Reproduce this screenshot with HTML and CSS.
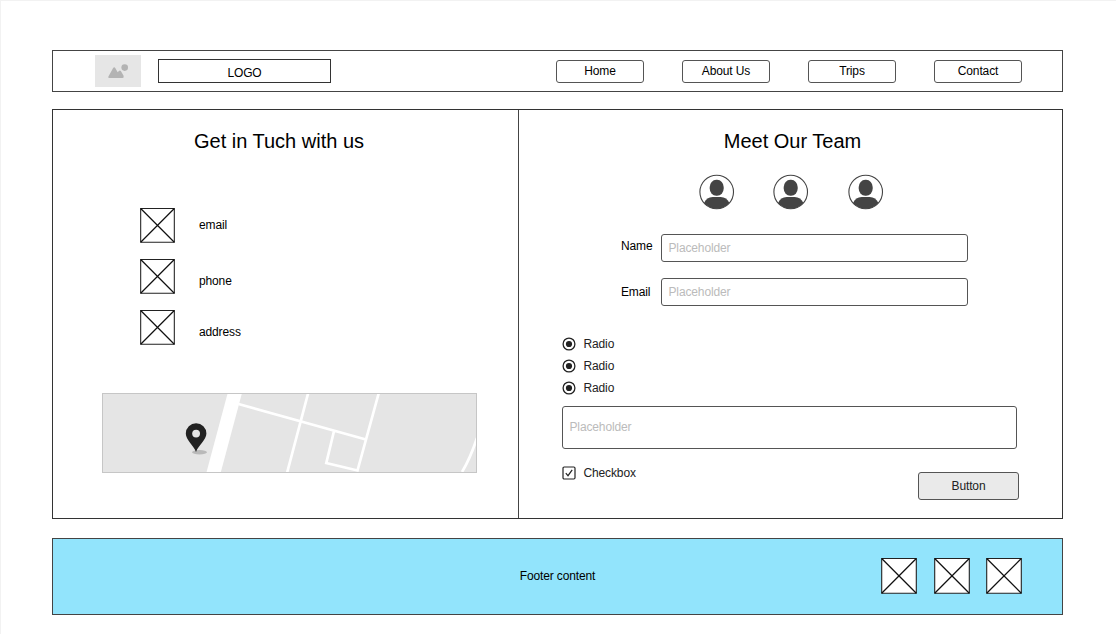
FILE: index.html
```html
<!DOCTYPE html>
<html lang="en">
<head>
<meta charset="utf-8">
<title>Contact</title>
<link rel="stylesheet" href="styles.css">
</head>
<body>
<svg class="defs" aria-hidden="true">
  <symbol id="cross" viewBox="0 0 36 36"><path d="M.7 .5H35.3V35.2H.7Z" fill="#fff" stroke="#222" stroke-width="1.1"/><path d="M.7 .5L35.3 35.2M35.3 .5L.7 35.2" stroke="#111" stroke-width="1.25"/></symbol>
  <symbol id="avatar" viewBox="0.3 0 36 36"><circle cx="18" cy="18" r="16.8" fill="#fff"/><path d="M5.300 29C7 25 10 23 14 23H22C26 23 29 25 30.700 29A16.800 16.800 0 0 1 5.300 29Z" fill="#444"/><rect x="11" y="5.800" width="14" height="16" rx="6.600" ry="7.300" fill="#444"/><circle cx="18" cy="18" r="16.800" fill="none" stroke="#444" stroke-width="1.100"/></symbol>
  <symbol id="radio" viewBox="0 0 14 14"><circle cx="7" cy="7" r="5.900" fill="#fff" stroke="#222" stroke-width="1.300"/><circle cx="7" cy="7" r="3.100" fill="#222"/></symbol>
</svg>
<div class="page">
  <header class="header">
    <svg class="picture" viewBox="0 0 46 32"><rect width="46" height="32" fill="#e6e6e6"/><circle cx="29.700" cy="12.600" r="3.300" fill="#b3b3b3"/><path d="M13.300 21.700L18 13.200Q19.200 11.400 20.400 13.200L22.700 17.200L23.900 15.900Q25 15 26 16.200L28.600 20.700Q29.200 22.900 27.500 23H14.500Q12.800 23 13.300 21.700Z" fill="#b3b3b3"/></svg>
    <div class="logo">LOGO</div>
    <nav class="nav"><a>Home</a><a>About Us</a><a>Trips</a><a>Contact</a></nav>
  </header>
  <main class="main">
    <section class="touch">
      <h2>Get in Tuch with us</h2>
      <ul class="contacts">
        <li><svg class="cross"><use href="#cross"/></svg><span>email</span></li>
        <li class="low"><svg class="cross"><use href="#cross"/></svg><span>phone</span></li>
        <li class="low"><svg class="cross"><use href="#cross"/></svg><span>address</span></li>
      </ul>
      <svg class="map" viewBox="0 0 375 80">
        <rect width="375" height="80" fill="#e5e5e5"/>
        <path d="M125.700 0H140L118.600 80H104.300Z" fill="#fff"/>
        <g fill="none" stroke="#fff" stroke-width="2.700">
          <path d="M136.500 11L263 46.300M206.200 0L185 80M276.800 0L255.500 77.500L224.300 70L232 38M375 45Q368 66 360 79"/>
        </g>
        <ellipse cx="97.500" cy="59.300" rx="7.500" ry="2.200" fill="#b9b9b9"/>
        <path d="M94 59C91.300 52 83.800 47 83.800 40.600A10.300 10.300 0 0 1 104.400 40.600C104.400 47 96.700 52 94 59Z" fill="#222"/>
        <circle cx="94.100" cy="40.600" r="3.900" fill="#e5e5e5"/>
        <rect x=".5" y=".5" width="374" height="79" fill="none" stroke="#c6c6c6"/>
      </svg>
    </section>
    <section class="team">
      <h2>Meet Our Team</h2>
      <div class="avatars"><svg><use href="#avatar"/></svg><svg><use href="#avatar"/></svg><svg><use href="#avatar"/></svg></div>
      <div class="field name"><span class="label">Name</span><div class="input">Placeholder</div></div>
      <div class="field"><span class="label">Email</span><div class="input">Placeholder</div></div>
      <div class="radios">
        <div class="option"><svg><use href="#radio"/></svg>Radio</div>
        <div class="option"><svg><use href="#radio"/></svg>Radio</div>
        <div class="option"><svg><use href="#radio"/></svg>Radio</div>
      </div>
      <div class="input message">Placeholder</div>
      <div class="actions">
        <div class="option"><svg viewBox="0 0 14 14"><rect x="1" y="1" width="12" height="12" rx="1.200" fill="#fff" stroke="#222" stroke-width="1.200"/><path d="M3.800 7.200L6 9.700L10.200 3.900" fill="none" stroke="#222" stroke-width="1.200"/></svg>Checkbox</div>
        <div class="button">Button</div>
      </div>
    </section>
  </main>
  <footer class="footer">
    <span>Footer content</span>
    <div class="social"><svg class="cross"><use href="#cross"/></svg><svg class="cross"><use href="#cross"/></svg><svg class="cross"><use href="#cross"/></svg></div>
  </footer>
</div>
</body>
</html>
```
FILE: styles.css
```css
* { box-sizing: border-box; }
body { margin: 0; background: #fff; color: #000; font: 12px/14px "Liberation Sans", Arial, sans-serif; letter-spacing: -.13px; }
svg { display: block; flex: none; }
.defs { display: none; }
.page { height: 634px; overflow: hidden; border-top: 1px solid #f2f2f2; border-left: 1px solid #f2f2f2; padding: 49px 53px 0 51px; }
.header { height: 42px; border: 1px solid #444; display: flex; align-items: flex-start; padding: 4px 40px 0 42.400px; }
.picture { width: 46px; height: 32px; }
.logo { margin: 4px 0 0 16.600px; width: 173px; height: 24px; border: 1px solid #333; text-align: center; padding-top: 6px; }
.nav { margin: 5px 0 0 auto; display: flex; gap: 38px; }
.nav a { width: 88px; height: 23px; border: 1px solid #555; border-radius: 3px; text-align: center; padding-top: 3px; }
.main { margin-top: 17px; height: 410px; border: 1px solid #333; display: flex; }
h2 { margin: 0; font-size: 20px; line-height: 23px; font-weight: 400; letter-spacing: 0; text-align: center; }
.touch { width: 465px; padding-top: 20px; }
.touch h2 { margin-right: 13px; }
.contacts { list-style: none; margin: 54px 0 0 87.400px; padding: 0; display: grid; gap: 15px; }
.contacts li { display: flex; align-items: center; gap: 23.600px; height: 36px; }
.low span { padding-top: 10px; }
.cross { width: 36px; height: 36px; }
.contacts .cross { width: 35px; height: 35px; }
.map { width: 375px; height: 80px; margin: 48px 0 0 49px; }
.team { flex: 1; border-left: 1px solid #444; padding: 20px 43px 0; }
.team h2 { margin-left: 4px; }
.avatars { display: flex; gap: 38.5px; margin: 21px 0 0 136.7px; }
.avatars svg { width: 36px; height: 36px; }
.field { display: flex; margin: 16px 0 0 59px; height: 28px; }
.name { margin-top: 24px; }
.label { width: 40px; padding-top: 7px; }
.name .label { padding-top: 5px; }
.input { width: 307px; height: 28px; border: 1px solid #555; border-radius: 3px; padding: 6px 0 0 6.500px; color: #bbb; }
.radios { margin-top: 27px; display: grid; }
.option { display: flex; align-items: center; gap: 7.500px; height: 22px; color: #222; }
.radios .option { height: 21.900px; }
.option svg { width: 14px; height: 14px; }
.message { width: 455px; height: 43px; margin-top: 7.300px; padding-top: 13px; }
.actions { display: flex; justify-content: space-between; align-items: flex-start; margin-top: 13px; }
.button { width: 101px; height: 28px; margin-top: 10px; border: 1px solid #555; border-radius: 3px; background: #eaeaea; color: #222; text-align: center; padding-top: 6px; }
.footer { margin-top: 19px; height: 77px; border: 1px solid #444; background: #92e4fc; display: grid; grid-template-columns: 1fr auto 1fr; align-items: center; }
.footer span { grid-column: 2; padding-bottom: 2px; }
.social { display: flex; gap: 16.500px; justify-self: end; margin: 0 40px 1px 0; }
```
